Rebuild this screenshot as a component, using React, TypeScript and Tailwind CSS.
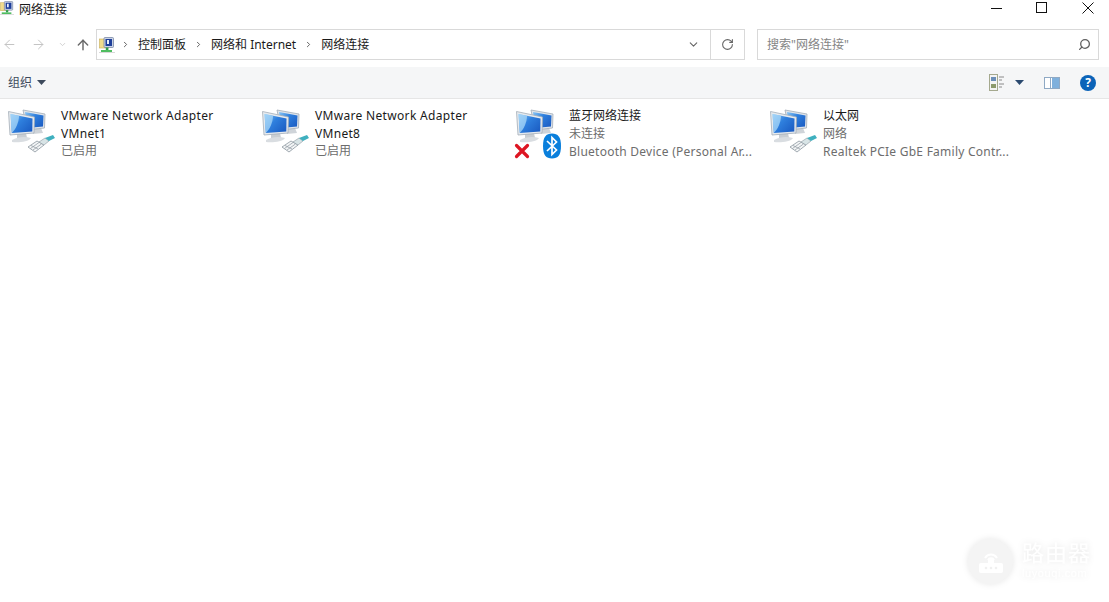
import React from 'react';
import { ArrowLeft, ArrowRight, ArrowUp, ChevronDown, ChevronRight, RotateCw, Search } from 'lucide-react';

const FONT = "font-['Noto_Sans','Noto_Sans_CJK_SC',sans-serif]";

const FolderNetIcon = ({ size = 16 }: { size?: number }) => (
  <svg width={size} height={size} viewBox="0 0 16 16" className="shrink-0">
    <rect x="0.5" y="2" width="9" height="9" fill="#f1dc8c" stroke="#c9ad55" strokeWidth="0.6" />
    <rect x="5" y="0.5" width="9.5" height="10" rx="1" fill="#c9d3e6" stroke="#6d7c9c" strokeWidth="0.7" />
    <rect x="6.500" y="2" width="6.500" height="7" fill="#1f3f9a" />
    <path d="M8 3h2v4H8z" fill="#e8edf7" />
    <rect x="6.800" y="10.500" width="2.600" height="2.500" fill="#2f9e4a" />
    <rect x="2" y="13" width="11" height="2" fill="#4fbd60" />
    <rect x="0" y="15" width="16" height="1" fill="#d8d8d8" />
  </svg>
);

const NetIcon = ({ bluetooth }: { bluetooth?: boolean }) => (
  <div className="relative w-[48px] h-[48px] shrink-0">
    <svg width="48" height="48" viewBox="0 0 48 48">
      <defs>
        <linearGradient id="screen" x1="0" y1="0" x2="1" y2="0.8">
          <stop offset="0" stopColor="#8cc8f5" />
          <stop offset="0.45" stopColor="#2f80de" />
          <stop offset="1" stopColor="#1c5ec4" />
        </linearGradient>
      </defs>
      {/* back monitor */}
      <path d="M24 21 L34 20 L36 25 L26 26 Z" fill="#cfd4d9" />
      <path d="M16 2 L38 6 L37.500 20 L20 22 Z" fill="#dfe4ea" stroke="#a3adb7" strokeWidth="0.8" />
      <path d="M18 4 L36.500 7.500 L36 18.500 L20 20 Z" fill="url(#screen)" />
      {/* front monitor */}
      <path d="M10 26 L19 25 L20 30 L10 31 Z" fill="#c9ced3" />
      <path d="M5 32 C10 29 18 28 24 30 C22 34 10 35 5 34 Z" fill="#d9dde1" />
      <path d="M1.500 3.500 L27.500 9 L27 25 L3 27 Z" fill="#e6eaee" stroke="#a3adb7" strokeWidth="0.8" />
      <path d="M3.500 6 L25.500 10.500 L25.300 23.500 L4.800 25 Z" fill="url(#screen)" />
      <path d="M3.500 6 L12 7.800 C12 14 9 21 4.800 25 Z" fill="#a9d8f8" opacity="0.75" />
      {!bluetooth && (
        <g>
          <path d="M21 39 L30 33 L37 37 L28 44 Z" fill="#f3f5f6" stroke="#8c979f" strokeWidth="0.8" />
          <path d="M23.500 40.500 L32 34.500 M26 42 L34.500 36 M24 37.500 L31 41" stroke="#8c979f" strokeWidth="0.7" />
          <path d="M32 34 L38 30 L42 33 L37 37 Z" fill="#d8e4e6" stroke="#8c979f" strokeWidth="0.6" />
          <path d="M38 30 L46 27 L48 30 L42 33 Z" fill="#3fb0bf" />
        </g>
      )}
    </svg>
    {bluetooth && (
      <>
        <svg width="16" height="16" viewBox="0 0 16 16" className="absolute left-[-1px] top-[35px]">
          <path d="M2.500 2.500 L13.500 13.500 M13.500 2.500 L2.500 13.500" stroke="#dd1522" strokeWidth="3.200" strokeLinecap="round" />
        </svg>
        <svg width="20" height="26" viewBox="0 0 20 26" className="absolute left-[27px] top-[25px]">
          <path d="M10 0.500 C16 0.500 19 4 19 13 C19 22 16 25.500 10 25.500 C4 25.500 1 22 1 13 C1 4 4 0.500 10 0.500 Z" fill="#0a7fdc" />
          <path d="M5 8 L14.500 17 L10 21.500 V4.500 L14.500 9 L5 18" fill="none" stroke="#fff" strokeWidth="1.700" />
        </svg>
      </>
    )}
  </div>
);

const connections = [
  { line1: 'VMware Network Adapter', line2: 'VMnet1', line3: '已启用', dark: true },
  { line1: 'VMware Network Adapter', line2: 'VMnet8', line3: '已启用', dark: true },
  { line1: '蓝牙网络连接', line2: '未连接', line3: 'Bluetooth Device (Personal Ar...', bluetooth: true },
  { line1: '以太网', line2: '网络', line3: 'Realtek PCIe GbE Family Contr...' },
];

const ConnectionItem = ({ item }: { item: (typeof connections)[number] }) => (
  <div className="w-[254px] flex gap-[6px] pl-[7px] shrink-0">
    <div className="pt-[9px]">
      <NetIcon bluetooth={item.bluetooth} />
    </div>
    <div className="pt-[8px] text-[12px] leading-[17.5px] whitespace-nowrap">
      <div className={`text-[#1a1a1a] ${item.dark ? 'tracking-[0.32px]' : ''}`}>{item.line1}</div>
      <div className={item.dark ? 'text-[#1a1a1a] tracking-[0.3px]' : 'text-[#6d6d6d]'}>{item.line2}</div>
      <div className={item.dark ? 'text-[#6d6d6d]' : 'text-[#6d6d6d] tracking-[0.25px] mt-[1px]'}>{item.line3}</div>
    </div>
  </div>
);

const App: React.FC = () => {
  return (
    <div className={`${FONT} relative w-[1109px] h-[602px] bg-white overflow-hidden text-[12px] text-[#1a1a1a]`}>
      {/* title bar */}
      <div className="h-[29px] flex items-start">
        <div className="flex items-center h-[16px] flex-1">
          <FolderNetIcon size={14} />
          <span className="ml-[5px] mt-[4px]">网络连接</span>
        </div>
        <div className="flex items-center h-[16px] pr-[15px]">
          <svg width="12" height="12" viewBox="0 0 12 12" className="text-[#111]"><path d="M0 6.500h11" stroke="currentColor" /></svg>
          <svg width="12" height="12" viewBox="0 0 12 12" className="ml-[33px] text-[#111]"><rect x="0.500" y="0.500" width="10" height="10" fill="none" stroke="currentColor" /></svg>
          <svg width="12" height="12" viewBox="0 0 12 12" className="ml-[34px] text-[#111]"><path d="M0.500 0.500L11.500 11.500M11.500 0.500L0.500 11.500" stroke="currentColor" /></svg>
        </div>
      </div>

      {/* address row */}
      <div className="h-[31px] flex items-center">
        <div className="w-[96px] flex items-center text-[#c4c4c4] pl-[2px] shrink-0">
          <ArrowLeft size={15} strokeWidth={1.6} />
          <ArrowRight size={15} strokeWidth={1.6} className="ml-[14px]" />
          <ChevronDown size={9} strokeWidth={2} className="ml-[12px]" />
          <ArrowUp size={16} strokeWidth={2.2} className="ml-[8px] text-[#6a6a6a]" />
        </div>
        <div className="w-[649px] h-[31px] border border-[#d9d9d9] flex items-center shrink-0">
          <div className="ml-[2px]"><FolderNetIcon size={16} /></div>
          <ChevronRight size={9} strokeWidth={2.4} className="ml-[6px] text-[#555]" />
          <span className="ml-[8px]">控制面板</span>
          <ChevronRight size={9} strokeWidth={2.4} className="ml-[8px] text-[#555]" />
          <span className="ml-[8px]">网络和 Internet</span>
          <ChevronRight size={9} strokeWidth={2.4} className="ml-[8px] text-[#555]" />
          <span className="ml-[8px]">网络连接</span>
          <div className="ml-auto w-[21px] flex justify-center"><ChevronDown size={13} strokeWidth={2} className="text-[#666]" /></div>
          <div className="w-[34px] h-full ml-[6px] border-l border-[#d9d9d9] flex items-center justify-center">
            <RotateCw size={13} strokeWidth={2} className="text-[#666]" />
          </div>
        </div>
        <div className="w-[342px] h-[31px] ml-[12px] border border-[#d9d9d9] flex items-center justify-between pl-[9px] pr-[7px] shrink-0">
          <span className="text-[#858585]">搜索"网络连接"</span>
          <Search size={13} strokeWidth={2.4} className="text-[#5f5f5f] scale-x-[-1]" />
        </div>
      </div>

      {/* toolbar */}
      <div className="mt-[7px] h-[32px] bg-[#f5f6f7] border-b border-[#e6e6e6] flex items-center pl-[8px]">
        <span className="text-[#3d4a5c]">组织</span>
        <svg width="9" height="5" viewBox="0 0 9 5" className="ml-[5px]"><path d="M0 0h9L4.500 5z" fill="#3d4a5c" /></svg>
        <div className="ml-auto flex items-center pr-[13px]">
          <svg width="15" height="17" viewBox="0 0 15 17">
            <rect x="0.500" y="0.500" width="8" height="16" fill="#f4f4f4" stroke="#a5a98e" />
            <rect x="2" y="3" width="5" height="4" fill="#6c8fb8" />
            <rect x="2" y="10" width="5" height="4" fill="#8c9a6c" />
            <path d="M10 3h5M10 6h3M10 10h5M10 13h3" stroke="#8a8a8a" />
          </svg>
          <svg width="9" height="5" viewBox="0 0 9 5" className="ml-[11px]"><path d="M0 0h9L4.500 5z" fill="#2b4a6f" /></svg>
          <svg width="16" height="12" viewBox="0 0 16 12" className="ml-[20px]">
            <rect x="0.500" y="0.500" width="15" height="11" fill="#fff" stroke="#8fa9c4" />
            <rect x="8" y="1" width="7" height="10" fill="#7fb0dc" />
            <rect x="6" y="1" width="1" height="10" fill="#8fa9c4" />
          </svg>
          <div className="ml-[20px] w-[16px] h-[16px] rounded-full bg-[#0b63b8] flex items-center justify-center text-white text-[12px] font-bold leading-none">?</div>
        </div>
      </div>

      {/* items */}
      <div className="flex">
        {connections.map((c) => (
          <ConnectionItem key={c.line1 + c.line2} item={c} />
        ))}
      </div>

      {/* watermark */}
      <div className="absolute left-[968px] top-[539px] flex items-center gap-[9px] font-['Liberation_Sans','Noto_Sans_CJK_SC',sans-serif] [filter:drop-shadow(0_0_3px_rgba(0,0,0,0.1))]">
        <div className="w-[45px] h-[45px] rounded-full bg-[#f4f4f4] flex items-center justify-center">
          <svg width="26" height="24" viewBox="0 0 26 24">
            <path d="M7 8a7 7 0 0 1 12 0M10 10a3.500 3.500 0 0 1 6 0" fill="none" stroke="#fff" strokeWidth="2" />
            <rect x="10" y="9" width="6" height="5" fill="#fff" />
            <rect x="1" y="13" width="24" height="10" rx="2" fill="#fff" />
            <circle cx="8" cy="18" r="1.300" fill="#f0f0f0" />
            <circle cx="13" cy="18" r="1.300" fill="#f0f0f0" />
            <circle cx="18" cy="18" r="1.300" fill="#f0f0f0" />
          </svg>
        </div>
        <div className="flex flex-col text-white -mt-[2px]">
          <span className="text-[22px] leading-[26px] tracking-[1px]">路由器</span>
          <span className="text-[11px] leading-[13px] tracking-[0.6px]">luyouqi.com</span>
        </div>
      </div>
    </div>
  );
};

export default App;
